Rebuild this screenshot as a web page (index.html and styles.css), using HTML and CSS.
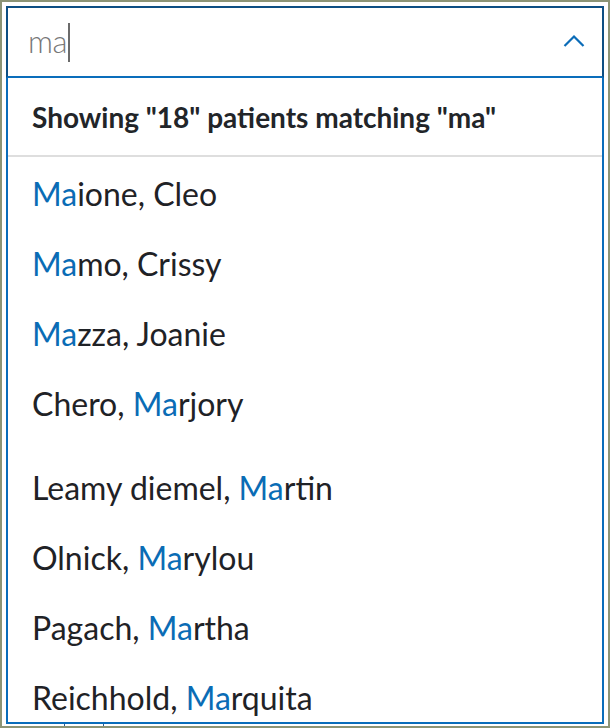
FILE: index.html
```html
<!DOCTYPE html>
<html lang="en">
<head>
<meta charset="utf-8">
<title>Patient search</title>
<link rel="stylesheet" href="styles.css">
</head>
<body>
<div class="combo">
  <div class="field">
    <div class="query"><span class="query-text">ma</span><span class="caret"></span></div>
    <svg class="chevron" width="22" height="14" viewBox="0 0 22 14" aria-hidden="true">
      <polyline points="1.5,12 11,2.5 20.5,12" fill="none" stroke="#0b6cb8" stroke-width="2.2"/>
    </svg>
  </div>
  <div class="menu">
    <div class="menu-header">Showing "18" patients matching "ma"</div>
    <ul class="options">
      <li class="option"><span class="hl">Ma</span>ione, Cleo</li>
      <li class="option"><span class="hl">Ma</span>mo, Crissy</li>
      <li class="option"><span class="hl">Ma</span>zza, Joanie</li>
      <li class="option option-gap">Chero, <span class="hl">Ma</span>rjory</li>
      <li class="option">Leamy diemel, <span class="hl">Ma</span>rtin</li>
      <li class="option">Olnick, <span class="hl">Ma</span>rylou</li>
      <li class="option">Pagach, <span class="hl">Ma</span>rtha</li>
      <li class="option">Reichhold, <span class="hl">Ma</span>rquita</li>
    </ul>
  </div>
</div>
<div class="peek">
  <span class="peek-line first"></span>
  <span class="peek-line second"></span>
</div>
</body>
</html>
```
FILE: styles.css
```css
* {
  box-sizing: border-box;
}

html {
  background: #ffffff;
}

body {
  margin: 0;
  width: 610px;
  height: 728px;
  border: 2px solid #8c9476;
  padding: 4px 4px 0 4px;
  background: #ffffff;
  font-family: "Lato", "Liberation Sans", sans-serif;
  overflow: hidden;
  display: flex;
  flex-direction: column;
}

.combo {
  width: 598px;
  display: flex;
  flex-direction: column;
}

.field {
  height: 72px;
  border: 2px solid #0d4f84;
  border-bottom-color: #0a6dbb;
  display: flex;
  align-items: center;
  justify-content: space-between;
  padding: 0 17px 0 20px;
}

.query {
  display: flex;
  align-items: center;
  height: 40px;
}

.query-text {
  font-weight: 300;
  font-size: 31px;
  color: #777777;
  letter-spacing: -0.5px;
  line-height: 40px;
  position: relative;
  top: -1px;
}

.caret {
  width: 2px;
  height: 39px;
  background: #6b6b6b;
  margin-left: 1px;
}

.chevron {
  display: block;
  margin-top: -2px;
}

.menu {
  height: 646px;
  border: 2px solid #0a6dbb;
  border-top: none;
  overflow: hidden;
}

.menu-header {
  height: 79px;
  border-bottom: 2px solid #dedede;
  padding-left: 24px;
  padding-top: 2px;
  font-weight: 700;
  font-size: 28px;
  line-height: 74px;
  color: #222529;
  white-space: nowrap;
}

.options {
  list-style: none;
  margin: 0;
  padding: 0;
}

.option {
  height: 70px;
  padding-left: 24px;
  padding-top: 3px;
  font-size: 32px;
  line-height: 68px;
  color: #1f2226;
  white-space: nowrap;
}

.option-gap {
  margin-bottom: 14px;
}

.hl {
  color: #0a6cb5;
}

.peek {
  height: 2px;
  display: flex;
}

.peek-line {
  width: 1px;
  height: 2px;
  background: #2f5e8c;
}

.peek-line.first {
  margin-left: 58px;
}

.peek-line.second {
  margin-left: 38px;
}
```
